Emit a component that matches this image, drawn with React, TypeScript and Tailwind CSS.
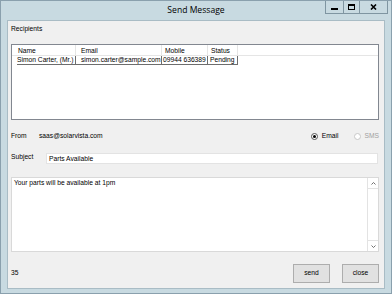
import React from "react";

const F = { fontFamily: '"Liberation Sans", Arial, sans-serif' } as React.CSSProperties;

function WinButtons() {
  return (
    <div className="flex h-[14px] border-b border-l border-r border-[#7f95a1]">
      <div className="w-[17px] h-full flex items-end justify-center pb-[3px] bg-[#c8dae1]">
        <div className="w-[7px] h-[2px] bg-black" />
      </div>
      <div className="w-[16px] h-full flex items-center justify-center border-l border-[#7f95a1] bg-[#c8dae1]">
        <div className="w-[7px] h-[6px] border border-black border-t-2" />
      </div>
      <div className="w-[28px] h-full flex items-center justify-center border-l border-[#7f95a1] bg-[#c8dae1]">
        <svg width="7" height="6" viewBox="0 0 7 6">
          <path d="M1 0.5 L6 5.5 M6 0.5 L1 5.5" stroke="black" strokeWidth="1.6" />
        </svg>
      </div>
    </div>
  );
}

function Radio({ checked, label, disabled }: { checked?: boolean; label: string; disabled?: boolean }) {
  return (
    <div className="flex items-center gap-[4px]">
      <div className={`w-[7px] h-[7px] rounded-full border ${disabled ? "border-[#c8c8c8]" : "border-[#555]"} bg-white flex items-center justify-center`}>
        {checked && <div className="w-[3px] h-[3px] rounded-full bg-black" />}
      </div>
      <span className={disabled ? "text-[#a0a0a0]" : "text-black"}>{label}</span>
    </div>
  );
}

export default function App() {
  return (
    <div className="w-[392px] h-[294px] bg-[#c8dae1] border border-[#8aa0ad] flex flex-col overflow-hidden" style={F}>
      <div className="h-[19px] grid grid-cols-[1fr_auto_1fr] shrink-0">
        <div />
        <div className="text-[8.6px] leading-[19px] text-black -mt-[0px]" style={{ fontFamily: '"Open Sans", "Liberation Sans", sans-serif' }}>
          Send Message
        </div>
        <div className="flex justify-end pr-[3px] -mt-[1px]">
          <WinButtons />
        </div>
      </div>
      <div className="mx-[6px] h-[269px] bg-[#f0f0f0] border border-[#a9bcc5] flex flex-col pl-[3px] pr-[5px] text-[6.7px] text-black">
        <div className="mt-[3px] h-[10px] leading-[10px]">Recipients</div>
        <div className="mt-[10px] h-[76px] border border-[#828790] bg-white flex flex-col">
          <div className="flex h-[11px] leading-[11px] border-b border-[#e5e5e5]">
            <div className="w-[64px] pl-[6px] border-r border-[#e5e5e5]">Name</div>
            <div className="w-[86px] pl-[5px] border-r border-[#e5e5e5]">Email</div>
            <div className="w-[46px] pl-[3px] border-r border-[#e5e5e5]">Mobile</div>
            <div className="w-[30px] pl-[3px] border-r border-[#e5e5e5]">Status</div>
          </div>
          <div className="flex h-[9px] leading-[8px]">
            <div className="w-[5px]" />
            <div className="w-[59px] border-b border-[#6d6d6d] border-r">Simon Carter, (Mr.)</div>
            <div className="w-[86px] pl-[5px] border-b border-r border-[#6d6d6d]">simon.carter@sample.com</div>
            <div className="w-[46px] pl-[1px] border-b border-r border-[#6d6d6d]">09944 636389</div>
            <div className="w-[30px] pl-[2px] border-b border-r border-[#6d6d6d]">Pending</div>
          </div>
        </div>
        <div className="mt-[11px] h-[10px] leading-[10px] flex items-center">
          <div className="w-[28px]">From</div>
          <div className="flex-1">saas@solarvista.com</div>
          <div className="flex items-center gap-[15px] pr-[0px]">
            <Radio checked label="Email" />
            <Radio label="SMS" disabled />
          </div>
        </div>
        <div className="mt-[12px] h-[11px] flex items-center">
          <div className="w-[35px] -mt-[3px]">Subject</div>
          <div className="flex-1 h-[11px] bg-white border border-[#e3e3e3] pl-[2px] leading-[10px] mr-[1px]">Parts Available</div>
        </div>
        <div className="mt-[13px] h-[75px] bg-white border border-[#d9d9d9] flex">
          <div className="flex-1 pl-[2px] pt-[1px] leading-[8px]">Your parts will be available at 1pm</div>
          <div className="w-[11px] border-l border-[#e3e3e3] flex flex-col justify-between">
            <div className="h-[11px] border-b border-[#e3e3e3] flex items-center justify-center">
              <svg width="5" height="3" viewBox="0 0 5 3"><path d="M0.5 2.5 L2.5 0.5 L4.5 2.5" stroke="#606060" fill="none" strokeWidth="0.9" /></svg>
            </div>
            <div className="h-[11px] border-t border-[#e3e3e3] flex items-center justify-center">
              <svg width="5" height="3" viewBox="0 0 5 3"><path d="M0.5 0.5 L2.5 2.5 L4.5 0.5" stroke="#606060" fill="none" strokeWidth="0.9" /></svg>
            </div>
          </div>
        </div>
        <div className="mt-[12px] h-[19px] flex items-center">
          <div className="flex-1">35</div>
          <div className="w-[37px] h-[19px] bg-[#e1e1e1] border border-[#adadad] flex items-center justify-center">send</div>
          <div className="w-[37px] h-[19px] ml-[12px] bg-[#e1e1e1] border border-[#adadad] flex items-center justify-center">close</div>
        </div>
      </div>
    </div>
  );
}
